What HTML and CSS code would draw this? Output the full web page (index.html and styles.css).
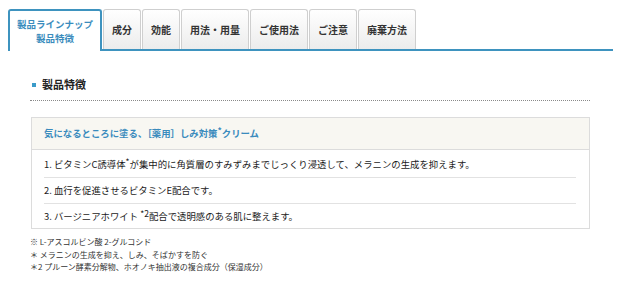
FILE: index.html
```html
<!DOCTYPE html>
<html lang="ja">
<head>
<meta charset="utf-8">
<link rel="stylesheet" href="styles.css">
</head>
<body>
<div class="page">
  <ul class="tabs">
    <li class="tab tab-active">製品ラインナップ<br>製品特徴</li>
    <li class="tab">成分</li>
    <li class="tab">効能</li>
    <li class="tab">用法・用量</li>
    <li class="tab">ご使用法</li>
    <li class="tab">ご注意</li>
    <li class="tab">廃棄方法</li>
  </ul>
  <div class="content">
    <h2 class="heading"><span class="heading-mark"></span>製品特徴</h2>
    <div class="box">
      <div class="box-head">気になるところに塗る、［薬用］しみ対策<sup class="sup">*</sup>クリーム</div>
      <ol class="points">
        <li class="point">1. ビタミンC誘導体<sup class="sup">*</sup>が集中的に角質層のすみずみまでじっくり浸透して、メラニンの生成を抑えます。</li>
        <li class="point">2. 血行を促進させるビタミンE配合です。</li>
        <li class="point">3. バージニアホワイト <sup class="sup">*2</sup>配合で透明感のある肌に整えます。</li>
      </ol>
    </div>
    <div class="notes">
      <p class="note">※ L-アスコルビン酸 2-グルコシド</p>
      <p class="note">＊ メラニンの生成を抑え、しみ、そばかすを防ぐ</p>
      <p class="note">＊2 プルーン酵素分解物、ホオノキ抽出液の複合成分（保湿成分）</p>
    </div>
  </div>
</div>
</body>
</html>
```

FILE: styles.css
```css
* { box-sizing: border-box; }
html, body { margin: 0; padding: 0; background: #fff; }
body {
  font-family: "Noto Sans CJK JP", "Noto Sans", sans-serif;
  color: #222;
}
.page { width: 620px; }

.tabs {
  list-style: none;
  margin: 9px 7px 0 8px;
  padding: 0;
  display: flex;
  align-items: flex-start;
  height: 42px;
  border-bottom: 2px solid #3e93bf;
}
.tab {
  height: 40px;
  margin-left: 1px;
  padding: 0 8px;
  border: 1px solid #cfcfcf;
  border-bottom: none;
  border-radius: 3px 3px 0 0;
  background: linear-gradient(#ffffff, #ececec);
  font-size: 10px;
  font-weight: bold;
  color: #333;
  display: flex;
  align-items: center;
  justify-content: center;
  white-space: nowrap;
}
.tab-active {
  margin-left: 0;
  width: 94px;
  height: 42px;
  margin-bottom: -2px;
  border: 2px solid #3e93bf;
  border-bottom: none;
  background: #fff;
  color: #3a8cbd;
  line-height: 14px;
  text-align: center;
  padding: 0 4px;
  font-size: 9.5px;
}

.content { padding: 0 30px; }

.heading {
  margin: 25px 0 0;
  padding: 0 0 8px;
  font-size: 11px;
  line-height: 16px;
  font-weight: bold;
  color: #222;
  border-bottom: 1px dotted #8a8a8a;
  display: flex;
  align-items: center;
}
.heading-mark {
  width: 4px;
  height: 4px;
  background: #3a9bc9;
  margin: 1px 6px 0 2px;
}

.box {
  margin: 16px 0 0 1px;
  border: 1px solid #dcdcdc;
}
.box-head {
  height: 32px;
  line-height: 31px;
  padding: 0 12px;
  background: #f8f7f2;
  border-bottom: 1px solid #dcdcdc;
  font-size: 9.4px;
  font-weight: bold;
  color: #3a8bbd;
}
.points {
  list-style: none;
  margin: 0;
  padding: 0 13px 0 12px;
}
.point {
  font-size: 9.4px;
  line-height: 25px;
  color: #1a1a1a;
  border-bottom: 1px solid #e2e2e2;
}
.point:first-child { padding-top: 2px; }
.point:last-child { border-bottom: none; line-height: 24px; }

.sup {
  font-size: 8.5px;
  line-height: 0;
  vertical-align: 3px;
}

.notes { margin-top: 7px; }
.note {
  margin: 0;
  font-size: 8px;
  line-height: 12.5px;
  color: #333;
}
```
